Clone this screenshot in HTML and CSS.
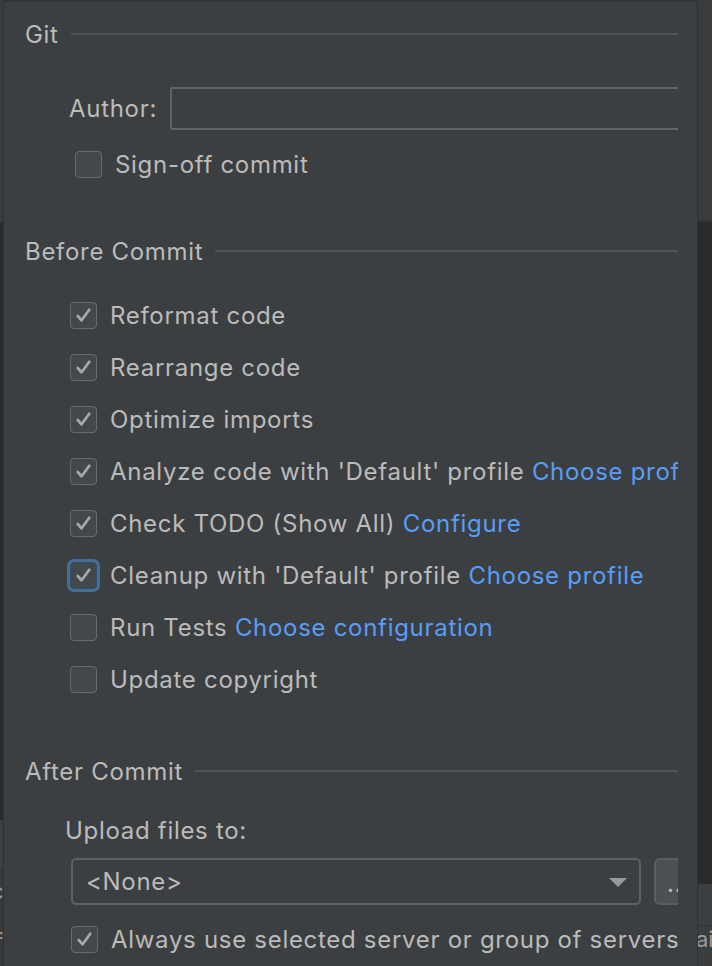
FILE: index.html
```html
<!DOCTYPE html>
<html>
<head>
<meta charset="utf-8">
<link rel="stylesheet" href="styles.css">
</head>
<body>
<div class="screen">
  <div class="strip strip-left">
    <div class="seg s-top-l"></div>
    <div class="seg s-dark-l"><span class="ghost g1">(</span></div>
    <div class="seg s-mid-l"><span class="ghost g2">(</span></div>
    <div class="seg s-low-l"><span class="ghost g3">c</span><span class="ghost g4">f</span></div>
  </div>
  <div class="panel">
    <div class="clip">
      <div class="title t-git"><span>Git</span><div class="rule"></div></div>

      <div class="author-row">
        <span class="label">Author:</span>
        <div class="input"></div>
      </div>

      <div class="row row-signoff">
        <span class="box"></span>
        <span class="text">Sign-off commit</span>
      </div>

      <div class="title t-before"><span>Before Commit</span><div class="rule"></div></div>

      <div class="checks">
        <div class="row"><span class="box on"><svg viewBox="0 0 26 26"><path d="M7 13.5 L11 18 L19 7"/></svg></span><span class="text">Reformat code</span></div>
        <div class="row"><span class="box on"><svg viewBox="0 0 26 26"><path d="M7 13.5 L11 18 L19 7"/></svg></span><span class="text">Rearrange code</span></div>
        <div class="row"><span class="box on"><svg viewBox="0 0 26 26"><path d="M7 13.5 L11 18 L19 7"/></svg></span><span class="text">Optimize imports</span></div>
        <div class="row"><span class="box on"><svg viewBox="0 0 26 26"><path d="M7 13.5 L11 18 L19 7"/></svg></span><span class="text">Analyze code with 'Default' profile <a class="link">Choose profile</a></span></div>
        <div class="row"><span class="box on"><svg viewBox="0 0 26 26"><path d="M7 13.5 L11 18 L19 7"/></svg></span><span class="text">Check TODO (Show All) <a class="link">Configure</a></span></div>
        <div class="row"><span class="box on focus"><svg viewBox="0 0 26 26"><path d="M7 13.5 L11 18 L19 7"/></svg></span><span class="text">Cleanup with 'Default' profile <a class="link">Choose profile</a></span></div>
        <div class="row"><span class="box"></span><span class="text">Run Tests <a class="link">Choose configuration</a></span></div>
        <div class="row"><span class="box"></span><span class="text">Update copyright</span></div>
      </div>

      <div class="title t-after"><span>After Commit</span><div class="rule"></div></div>

      <div class="upload-label">Upload files to:</div>
      <div class="combo-row">
        <div class="combo"><span>&lt;None&gt;</span><svg class="arrow" viewBox="0 0 18 9"><path d="M0 0 H18 L9 9 Z"/></svg></div>
        <div class="dots">...</div>
      </div>
      <div class="row row-always"><span class="box on"><svg viewBox="0 0 26 26"><path d="M7 13.5 L11 18 L19 7"/></svg></span><span class="text">Always use selected server or group of servers</span></div>
    </div>
  </div>
  <div class="strip strip-right">
    <div class="seg s-top-r"></div>
    <div class="seg s-dark-r"></div>
    <div class="seg s-mid-r"></div>
    <div class="seg s-low-r"><span class="ghost g5">ai</span></div>
  </div>
</div>
</body>
</html>
```

FILE: styles.css
```css
* { box-sizing: border-box; }
html, body { margin: 0; padding: 0; }
body {
  width: 712px;
  height: 966px;
  overflow: hidden;
  background: #3b3d3f;
  font-family: Inter, "Noto Sans", "Liberation Sans", sans-serif;
  font-size: 24px;
  letter-spacing: 0.7px;
  color: #bbbbbb;
}
.screen {
  display: flex;
  width: 712px;
  height: 966px;
}
.strip {
  display: flex;
  flex-direction: column;
  overflow: hidden;
}
.strip-left { width: 3px; }
.strip-right { width: 14px; }
.seg { position: relative; overflow: hidden; }
.s-top-l { height: 222px; background: #3a3c3e; }
.s-dark-l { height: 598px; background: #2b2b2b; }
.s-mid-l { height: 50px; background: #3c3f41; border-bottom: 1px solid #323232; }
.s-low-l { flex: 1; background: #37393b; }
.s-top-r { height: 222px; background: #3a3c3e; border-bottom: 2px solid #333333; }
.s-dark-r { height: 662px; background: #2a2a2a; }
.s-mid-r { height: 42px; background: #3c3f41; border-bottom: 1px solid #333333; }
.s-low-r { flex: 1; background: #3b3d3f; }
.ghost {
  position: absolute;
  color: #9a9a9a;
  font-size: 22px;
  letter-spacing: 0;
  line-height: 1;
}
.g1 { left: -9px; top: 18px; }
.g2 { left: -9px; top: 12px; }
.g3 { left: -9px; top: 10px; }
.g4 { left: -5px; top: 60px; }
.g5 { left: -2px; top: 2px; }

.panel {
  width: 695px;
  height: 966px;
  background: #3c3f41;
  border-top: 2px solid #313335;
  border-left: 1px solid #2f3133;
  border-right: 1px solid #2f3133;
  padding: 12px 20px 0 0;
}
.clip {
  width: 674px;
  height: 952px;
  overflow: hidden;
  padding-left: 21px;
}

.title {
  display: flex;
  align-items: center;
  gap: 12px;
  height: 40px;
  white-space: nowrap;
}
.title span { flex: none; }
.rule {
  flex: 1;
  height: 2px;
  background: #515355;
}
.t-before { margin-top: 54px; }
.t-after { margin-top: 46px; }

.author-row {
  display: flex;
  align-items: center;
  gap: 13px;
  margin-top: 33px;
  margin-left: 44px;
  height: 43px;
  white-space: nowrap;
}
.label { flex: none; }
.input {
  flex: none;
  width: 600px;
  height: 43px;
  border: 2px solid #646464;
  border-radius: 2px;
  background: #3c3f41;
}

.row {
  display: flex;
  align-items: center;
  gap: 13px;
  height: 52px;
  white-space: nowrap;
}
.row-signoff {
  height: 26px;
  margin-top: 21px;
  margin-left: 50px;
}
.checks {
  margin-top: 18px;
  margin-left: 45px;
}
.row-always {
  margin-top: 8px;
  margin-left: 46px;
}
.box {
  flex: none;
  width: 27px;
  height: 27px;
  border: 1.5px solid #686a6c;
  border-radius: 4px;
  background: #43494a;
  display: flex;
  align-items: center;
  justify-content: center;
}
.box svg { width: 25px; height: 25px; }
.box svg path {
  fill: none;
  stroke: #a8a8a8;
  stroke-width: 2.8;
  stroke-linecap: round;
  stroke-linejoin: round;
}
.box.focus {
  border: 1.5px solid #2f4f70;
  box-shadow: 0 0 0 3px #466d94;
}
.text { flex: none; }
.link { color: #589df6; }

.upload-label {
  margin-top: 25px;
  margin-left: 40px;
  height: 30px;
  line-height: 30px;
  white-space: nowrap;
}
.combo-row {
  display: flex;
  gap: 13px;
  margin-top: 12px;
  margin-left: 46px;
  height: 47px;
}
.combo {
  flex: none;
  width: 570px;
  height: 47px;
  border: 2px solid #5e6062;
  border-radius: 5px;
  display: flex;
  align-items: center;
  justify-content: space-between;
  padding: 0 12px 0 13px;
}
.arrow { width: 18px; height: 9px; margin-top: 2px; }
.arrow path { fill: #9a9a9a; }
.dots {
  flex: none;
  width: 60px;
  height: 47px;
  background: #4c5052;
  border: 2px solid #5b5e61;
  border-radius: 6px;
  padding-left: 11px;
  line-height: 47px;
  color: #bbbbbb;
}
```
